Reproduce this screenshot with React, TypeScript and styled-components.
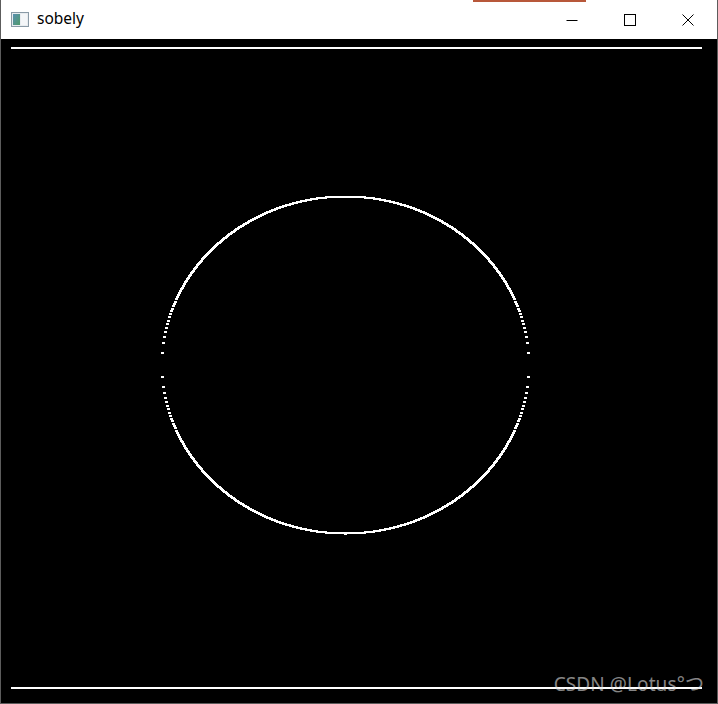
import React from "react";
import styled, { createGlobalStyle } from "styled-components";

const GlobalStyle = createGlobalStyle`
  html, body {
    margin: 0;
    padding: 0;
    background: #ffffff;
  }
  body {
    font-family: "Noto Sans", "Liberation Sans", sans-serif;
  }
`;

const Window = styled.div`
  width: 718px;
  height: 704px;
  box-sizing: border-box;
  border: 1px solid #5c5c5c;
  border-top: none;
  display: flex;
  flex-direction: column;
  background: #000;
`;

const TitleBar = styled.div`
  position: relative;
  height: 39px;
  flex: none;
  background: #ffffff;
  display: flex;
  align-items: center;
  padding-left: 10px;
`;

// sliver of another window peeking at the very top
const Sliver = styled.span`
  position: absolute;
  left: 472px;
  top: 0;
  width: 113px;
  height: 2px;
  background: #b8583a;
`;

const AppIcon = styled.svg`
  width: 18px;
  height: 15px;
  flex: none;
  margin-right: 8px;
`;

const Title = styled.span`
  font-size: 15.5px;
  color: #000;
  flex: 1;
  line-height: 1;
  margin-top: -1px;
`;

const Controls = styled.div`
  display: flex;
  height: 100%;
`;

const ControlButton = styled.div`
  width: 58px;
  height: 100%;
  display: flex;
  align-items: center;
  justify-content: center;
`;

const Canvas = styled.div`
  position: relative;
  flex: 1;
  background: #000;
  overflow: hidden;
`;

const Watermark = styled.span`
  position: absolute;
  right: 13px;
  bottom: 6px;
  font-family: "Noto Sans", "Noto Sans CJK SC", sans-serif;
  font-size: 19px;
  color: rgba(225, 225, 225, 0.6);
  letter-spacing: 0.1px;
`;

const cx = 344;
const cy = 326;
const rx = 183.5;
const ry = 168.5;

function edgePoints() {
  const pts: { x: number; y: number }[] = [];
  for (let x = 161; x <= 527; x++) {
    const dx = x - cx;
    const t = 1 - (dx / rx) * (dx / rx);
    if (t <= 0) continue;
    const off = ry * Math.sqrt(t);
    pts.push({ x, y: cy - off });
    pts.push({ x, y: cy + off });
  }
  return pts;
}

const points = edgePoints();

export default function App() {
  return (
    <>
      <GlobalStyle />
      <Window>
        <TitleBar>
          <Sliver />
          <AppIcon viewBox="0 0 18 15">
            <defs>
              <linearGradient id="ig" x1="0" y1="0" x2="1" y2="1">
                <stop offset="0" stopColor="#5a8fb0" />
                <stop offset="1" stopColor="#4f9a6a" />
              </linearGradient>
            </defs>
            <rect x="0.5" y="0.5" width="17" height="14" fill="#e8ecef" stroke="#8a9aa6" />
            <rect x="2" y="2" width="7" height="11" fill="url(#ig)" />
            <rect x="10" y="2" width="6" height="11" fill="#f4f6f8" />
          </AppIcon>
          <Title>sobely</Title>
          <Controls>
            <ControlButton>
              <svg width="12" height="12" viewBox="0 0 12 12">
                <path d="M0.5 6.5h11" stroke="#000" strokeWidth="1" />
              </svg>
            </ControlButton>
            <ControlButton>
              <svg width="12" height="12" viewBox="0 0 12 12">
                <rect x="0.5" y="0.5" width="11" height="11" fill="none" stroke="#000" strokeWidth="1" />
              </svg>
            </ControlButton>
            <ControlButton>
              <svg width="12" height="12" viewBox="0 0 12 12">
                <path d="M0.5 0.5l11 11M11.5 0.5l-11 11" stroke="#000" strokeWidth="1" />
              </svg>
            </ControlButton>
          </Controls>
        </TitleBar>
        <Canvas>
          <svg width="716" height="664" viewBox="0 0 716 664" shapeRendering="crispEdges">
            <rect x="10" y="8" width="691" height="2" fill="#fff" />
            <rect x="10" y="648" width="691" height="2" fill="#fff" />
            {points.map((p, i) => (
              <rect key={i} x={p.x - 1} y={Math.round(p.y) - 1} width="3" height="2" fill="#fff" />
            ))}
          </svg>
          <Watermark>CSDN @Lotus°つ</Watermark>
        </Canvas>
      </Window>
    </>
  );
}
